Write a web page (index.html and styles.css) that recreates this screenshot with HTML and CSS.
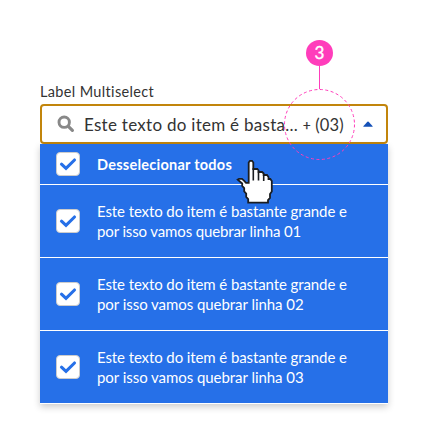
FILE: index.html
```html
<!DOCTYPE html>
<html lang="pt-BR">
<head>
<meta charset="utf-8">
<title>Multiselect</title>
<link rel="stylesheet" href="styles.css">
</head>
<body>
<svg class="defs" width="0" height="0">
  <symbol id="check" viewBox="0 0 24 24"><path d="M5.5 12.2 10 16.4 18.5 8" fill="none" stroke="#2670e8" stroke-width="3.1" stroke-linecap="round"/></symbol>
</svg>
<main class="multiselect">
  <div class="label"><span class="label-text">Label Multiselect</span></div>
  <div class="field">
    <svg class="search" viewBox="0 0 18 18"><circle cx="7.2" cy="7.2" r="5.2" fill="none" stroke="#888" stroke-width="2.9"/><path d="m11.3 11.3 4.1 4.1" stroke="#888" stroke-width="3.2" stroke-linecap="round"/></svg>
    <span class="value">Este texto do item é basta...</span>
    <span class="count"><span class="plus">+</span> (03)</span>
    <svg class="arrow" viewBox="0 0 10 6"><path d="M.3 5.3 4.4.8Q5 .3 5.6.8L9.7 5.3Q9.7 5.8 9.2 5.8H.8Q.3 5.8.3 5.3Z" fill="#1551b8"/></svg>
  </div>
  <ul class="list">
    <li class="row all"><span class="box"><svg><use href="#check"/></svg></span><span class="text">Desselecionar todos</span></li>
    <li class="row"><span class="box"><svg><use href="#check"/></svg></span><span class="text"><span class="first">Este texto do item é bastante grande e</span><br><span class="second">por isso vamos quebrar linha 01</span></span></li>
    <li class="row"><span class="box"><svg><use href="#check"/></svg></span><span class="text"><span class="first">Este texto do item é bastante grande e</span><br><span class="second wide">por isso vamos quebrar linha 02</span></span></li>
    <li class="row"><span class="box"><svg><use href="#check"/></svg></span><span class="text"><span class="first">Este texto do item é bastante grande e</span><br><span class="second wide">por isso vamos quebrar linha 03</span></span></li>
  </ul>
</main>
<div class="badge">3</div>
<svg class="callout" viewBox="0 0 72 96"><path d="M35.5 1v23" stroke="#ff3dbb"/><circle cx="35.5" cy="59.5" r="35" fill="none" stroke="#ff3dbb" stroke-dasharray="3 2.5"/></svg>
<svg class="cursor" viewBox="0 0 38 46"><path d="M12.700 3.500 14 1.800h2l1.300 1.700V10h4l1.300 1.500V13h3.500l1.600 1.500V16H31l1.500 2v2h1.800l1.500 2v10.500L34 35v4l-2 2v2.700H12.200V40l-2-2v-3.500l-2-2V29l-2-2v-2.500l-4.500-3.800L3 19.900h3l2 1.700 2 2.300h2.700z" fill="#fff" stroke="#1b1d20" stroke-width="1.800"/><path d="M17.300 9v12.500M22.500 12v9.500M27.700 15v7" stroke="#1b1d20" stroke-width="1.600"/></svg>
</body>
</html>
```
FILE: styles.css
```css
* { box-sizing: border-box; }
body {
  margin: 0;
  height: 444px;
  position: relative;
  overflow: hidden;
  background: #fff;
  color: #333;
  font-family: Lato, "Liberation Sans", sans-serif;
}
.defs { position: absolute; }
.multiselect { width: 348px; margin-left: 40px; padding-top: 82px; }
.label { height: 22px; font-size: 14.5px; line-height: 20px; font-weight: 400; white-space: nowrap; }
.label-text { letter-spacing: .35px; }
.field {
  height: 40px;
  display: flex;
  align-items: center;
  border: 2px solid #c2850c;
  border-radius: 4px;
  padding-left: 15px;
  white-space: nowrap;
}
.search { width: 18px; height: 18px; flex: none; }
.value { width: 219px; margin-left: 9px; padding-top: 1px; font-size: 17px; letter-spacing: .28px; line-height: 24px; flex: none; }
.count { width: 43px; padding-top: 1px; font-size: 16.5px; letter-spacing: .2px; flex: none; }
.plus { font-size: 13px; -webkit-text-stroke: .3px #333; position: relative; top: -1px; }
.arrow { width: 10px; height: 6px; margin-left: 17px; flex: none; }
.list {
  list-style: none;
  margin: 0;
  padding: 0;
  color: #fff;
  font-size: 15px;
  line-height: 20px;
  box-shadow: 0 3px 7px rgba(0, 0, 0, .2);
}
.row {
  height: 73px;
  display: flex;
  align-items: center;
  gap: 17px;
  padding-left: 16px;
  background: #2670e8;
  border-bottom: 1px solid #fff;
  white-space: nowrap;
}
.all { height: 41px; font-size: 14.5px; font-weight: 700; letter-spacing: .25px; }
.all .text { padding-top: 1px; }
.box { width: 24px; height: 24px; flex: none; background: #fff; border: 1px solid #ccc; border-radius: 4px; }
.box svg { display: block; width: 24px; height: 24px; margin: -1px; }
.first { letter-spacing: -.1px; }
.second { letter-spacing: -.13px; }
.wide { letter-spacing: -.05px; }
.badge {
  position: absolute;
  left: 306px;
  top: 40px;
  width: 27px;
  height: 26px;
  border-radius: 50%;
  background: #ff3dbb;
  color: #fff;
  font-size: 17px;
  line-height: 26px;
  text-align: center;
  -webkit-text-stroke: .4px #fff;
}
.callout { position: absolute; left: 284px; top: 65px; width: 72px; height: 96px; }
.cursor { position: absolute; left: 236px; top: 159px; width: 38px; height: 46px; }
```
